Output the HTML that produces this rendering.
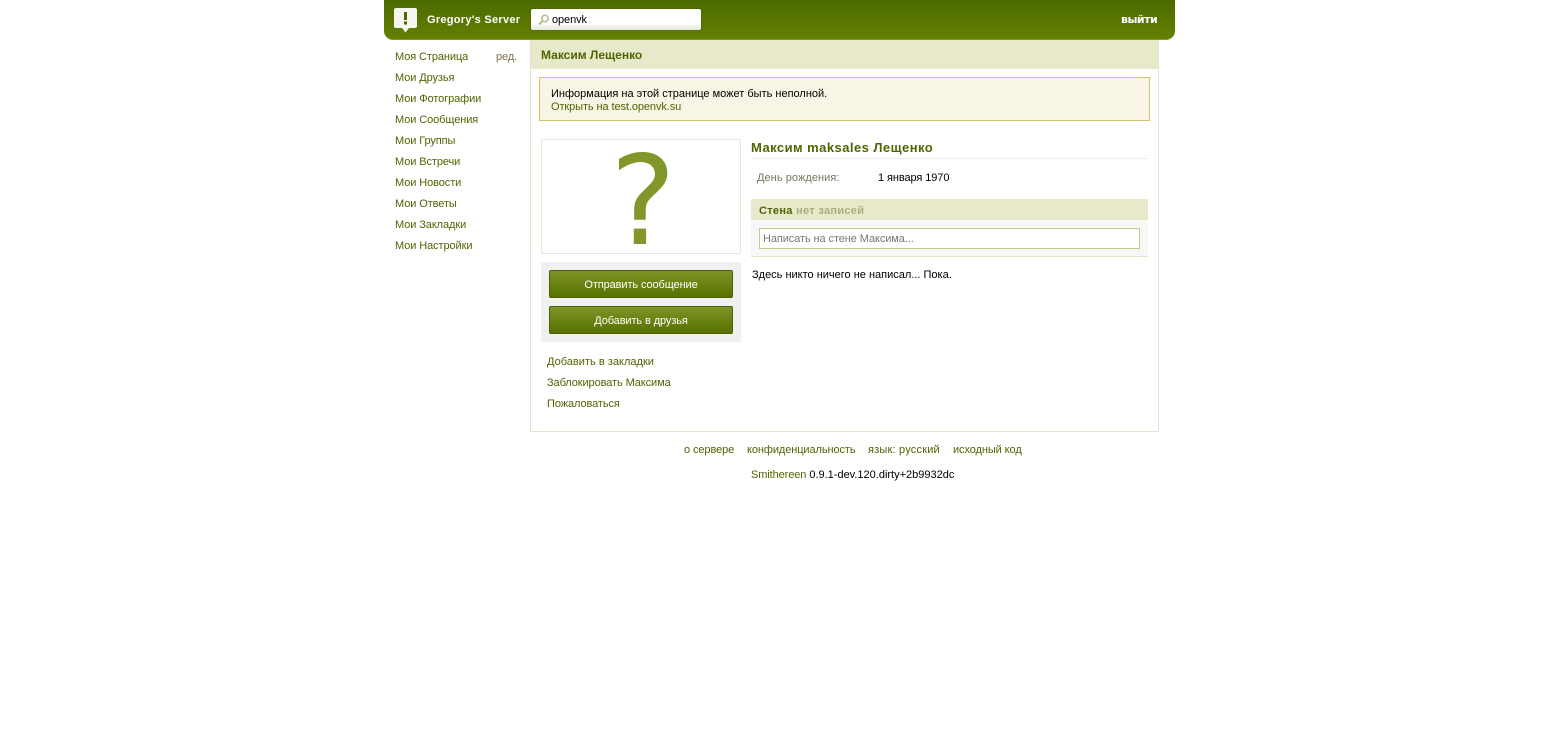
<!DOCTYPE html>
<html><head><meta charset="utf-8"><style>
html,body{margin:0;padding:0;background:#fff;width:1559px;height:742px;overflow:hidden}
body{font:11px/14px "Liberation Sans",sans-serif;position:relative;color:#000}
.a{position:absolute;white-space:nowrap}
.t{letter-spacing:-.09px}
.z{letter-spacing:0}
.g{color:#4e6500}
.m{left:395px}
.b{position:absolute;left:549px;width:182px;height:26px;border:1px solid #4a6000;border-radius:2px;background:linear-gradient(#7e9428,#567200);color:#fff;text-align:center;line-height:29px;letter-spacing:-.1px}
</style></head><body>
<div class="a" style="left:384px;top:0;width:791px;height:39px;background:linear-gradient(#4b6a00,#648000);border-bottom:1px solid #7e9a2c;border-radius:0 0 9px 9px"></div>
<svg class="a" style="left:394px;top:8px" width="23" height="25" viewBox="0 0 23 25"><path d="M2 0H21a2 2 0 0 1 2 2V18a2 2 0 0 1-2 2H15L11.500 24.500 8 20H2a2 2 0 0 1-2-2V2A2 2 0 0 1 2 0Z" fill="#f6f6f0"/><rect x="10" y="4" width="3" height="8" fill="#4e6500"/><rect x="10" y="13.500" width="3" height="3" fill="#4e6500"/></svg>
<div class="a" style="left:427px;top:13px;color:#fff;font:bold 11px/14px 'Liberation Sans',sans-serif;letter-spacing:.28px">Gregory's Server</div>
<div class="a" style="left:531px;top:9px;width:170px;height:21px;background:linear-gradient(#fff 65%,#e4e6dc);border-radius:2px;box-shadow:0 0 1px #3d5500"></div>
<svg class="a" style="left:537px;top:14px" width="13" height="12" viewBox="0 0 13 12"><circle cx="8" cy="4.500" r="3.200" fill="none" stroke="#b4bf8a" stroke-width="1.600"/><path d="M5.500 7L2 10.500" stroke="#b4bf8a" stroke-width="2"/></svg>
<div class="a t" style="left:552px;top:13px">openvk</div>
<div class="a" style="left:1121px;top:13px;color:#fff;font:bold 11px/14px 'DejaVu Sans',sans-serif;letter-spacing:-.5px">выйти</div>

<div class="a m t g" style="top:50px">Моя Страница</div>
<div class="a t" style="left:496px;top:50px;color:#7b6f4a">ред.</div>
<div class="a m t g" style="top:71px">Мои Друзья</div>
<div class="a m t g" style="top:92px">Мои Фотографии</div>
<div class="a m t g" style="top:113px">Мои Сообщения</div>
<div class="a m t g" style="top:134px">Мои Группы</div>
<div class="a m t g" style="top:155px">Мои Встречи</div>
<div class="a m t g" style="top:176px">Мои Новости</div>
<div class="a m t g" style="top:197px">Мои Ответы</div>
<div class="a m t g" style="top:218px">Мои Закладки</div>
<div class="a m t g" style="top:239px">Мои Настройки</div>

<div class="a" style="left:530px;top:40px;width:627px;height:391px;border:1px solid #e3e3cf;border-top:0"></div>
<div class="a" style="left:531px;top:40px;width:627px;height:29px;background:#e8e8cb"></div>
<div class="a g" style="left:541px;top:48px;font:bold 12px/14px 'Liberation Sans',sans-serif">Максим Лещенко</div>
<div class="a" style="left:539px;top:77px;width:609px;height:42px;background:#f8f5e6;border:1px solid #d8c265"></div>
<div class="a z" style="left:551px;top:87px">Информация на этой странице может быть неполной.</div>
<div class="a t g" style="left:551px;top:100px">Открыть на test.openvk.su</div>

<div class="a" style="left:541px;top:139px;width:198px;height:113px;border:1px solid #e8e8d8;border-radius:2px"></div>
<div class="a" style="left:543px;top:135px;width:200px;text-align:center;color:#81962b;font:124px/135px 'DejaVu Sans',sans-serif">?</div>
<div class="a" style="left:541px;top:262px;width:200px;height:80px;background:#f0f0f0"></div>
<div class="b" style="top:270px">Отправить сообщение</div>
<div class="b" style="top:306px">Добавить в друзья</div>
<div class="a z g" style="left:547px;top:355px;letter-spacing:.02px">Добавить в закладки</div>
<div class="a t g" style="left:547px;top:376px">Заблокировать Максима</div>
<div class="a t g" style="left:547px;top:397px">Пожаловаться</div>

<div class="a g" style="left:751px;top:140px;font:bold 13px/15px 'Liberation Sans',sans-serif;letter-spacing:.45px">Максим maksales Лещенко</div>
<div class="a" style="left:751px;top:158px;width:397px;height:1px;background:#eeeee6"></div>
<div class="a" style="left:757px;top:171px;color:#77775f;letter-spacing:.06px">День рождения:</div>
<div class="a t" style="left:878px;top:171px">1 января 1970</div>
<div class="a" style="left:751px;top:199px;width:397px;height:21px;background:#e8e8cb"></div>
<div class="a" style="left:759px;top:204px;font:bold 11px/14px 'Liberation Sans',sans-serif;color:#4e6500;letter-spacing:.3px">Стена <span style="color:#a9b07c">нет записей</span></div>
<div class="a" style="left:751px;top:220px;width:397px;height:36px;background:#f7f7f7;border-bottom:1px solid #e3e3cb"></div>
<div class="a" style="left:759px;top:228px;width:379px;height:19px;background:#fff;border:1px solid #c7ca8a"></div>
<div class="a t" style="left:763px;top:232px;color:#777">Написать на стене Максима...</div>
<div class="a z" style="left:752px;top:268px">Здесь никто ничего не написал... Пока.</div>

<div class="a t g" style="left:684px;top:443px">о сервере</div>
<div class="a t g" style="left:747px;top:443px">конфиденциальность</div>
<div class="a g" style="left:868px;top:443px;letter-spacing:.2px">язык: русский</div>
<div class="a t g" style="left:953px;top:443px">исходный код</div>
<div class="a z" style="left:751px;top:468px"><span class="g" style="letter-spacing:-.1px">Smithereen</span> 0.9.1-dev.120.dirty+2b9932dc</div>
</body></html>
